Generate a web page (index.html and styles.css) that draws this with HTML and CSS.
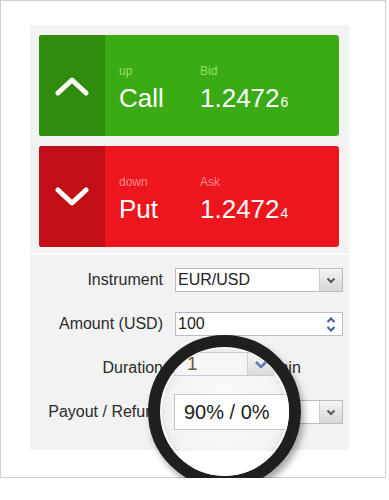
FILE: index.html
```html
<!DOCTYPE html>
<html>
<head>
    <title>Trade panel</title>
    <link rel="stylesheet" href="styles.css">
</head>
<body>
    <div class="frame">
        <div class="panel">
            <div class="trade trade--call">
                <div class="trade__icon">
                    <svg width="36" height="20" viewBox="0 0 36 20"><polyline points="4,17 18,4 32,17" fill="none" stroke="#fff" stroke-width="5" stroke-linecap="round" stroke-linejoin="round"/></svg>
                </div>
                <div class="trade__col trade__col--name">
                    <div class="trade__label">up</div>
                    <div class="trade__value">Call</div>
                </div>
                <div class="trade__col">
                    <div class="trade__label">Bid</div>
                    <div class="trade__value">1.2472<small>6</small></div>
                </div>
            </div>
            <div class="trade trade--put">
                <div class="trade__icon">
                    <svg width="36" height="20" viewBox="0 0 36 20"><polyline points="4,3 18,16 32,3" fill="none" stroke="#fff" stroke-width="5" stroke-linecap="round" stroke-linejoin="round"/></svg>
                </div>
                <div class="trade__col trade__col--name">
                    <div class="trade__label">down</div>
                    <div class="trade__value">Put</div>
                </div>
                <div class="trade__col">
                    <div class="trade__label">Ask</div>
                    <div class="trade__value">1.2472<small>4</small></div>
                </div>
            </div>

            <div class="form">
                <div class="form__row">
                    <label class="form__label">Instrument</label>
                    <div class="field">
                        <span class="field__text">EUR/USD</span>
                        <span class="field__btn">
                            <svg width="10" height="7" viewBox="0 0 10 7"><polyline points="1.5,1.5 5,5 8.5,1.5" fill="none" stroke="#555" stroke-width="2"/></svg>
                        </span>
                    </div>
                </div>
                <div class="form__row">
                    <label class="form__label">Amount (USD)</label>
                    <div class="field">
                        <span class="field__text">100</span>
                        <span class="field__spin">
                            <svg width="10" height="6" viewBox="0 0 10 6"><polyline points="1.5,5 5,1.5 8.5,5" fill="none" stroke="#3d5f9e" stroke-width="2"/></svg>
                            <svg width="10" height="6" viewBox="0 0 10 6"><polyline points="1.5,1 5,4.5 8.5,1" fill="none" stroke="#3d5f9e" stroke-width="2"/></svg>
                        </span>
                    </div>
                </div>
                <div class="form__row">
                    <label class="form__label">Duration</label>
                    <div class="field field--short">
                        <span class="field__text"></span>
                        <span class="field__btn">
                            <svg width="10" height="7" viewBox="0 0 10 7"><polyline points="1.5,1.5 5,5 8.5,1.5" fill="none" stroke="#3d5f9e" stroke-width="2"/></svg>
                        </span>
                    </div>
                    <span class="form__unit">min</span>
                </div>
                <div class="form__row">
                    <label class="form__label">Payout / Refund</label>
                    <div class="field">
                        <span class="field__text"></span>
                        <span class="field__btn">
                            <svg width="10" height="7" viewBox="0 0 10 7"><polyline points="1.5,1.5 5,5 8.5,1.5" fill="none" stroke="#555" stroke-width="2"/></svg>
                        </span>
                    </div>
                </div>
            </div>
        </div>

        <!-- lupe over duration / payout, shows their values -->
        <div class="lens">
            <div class="lens__dur">
                <span class="lens__dur-text">1</span>
                <span class="lens__dur-btn">
                    <svg width="14" height="9" viewBox="0 0 14 9"><polyline points="2,2 7,7 12,2" fill="none" stroke="#5b7bb5" stroke-width="2.5"/></svg>
                </span>
            </div>
            <div class="lens__field">90% / 0%</div>
            <div class="lens__floor"></div>
        </div>
    </div>
</body>
</html>
```

FILE: styles.css
```css
* {
    margin: 0;
    padding: 0;
    box-sizing: border-box;
}
body {
    background: #fff;
    font-family: "Liberation Sans", Arial, sans-serif;
}
.frame {
    position: relative;
    width: 386px;
    height: 478px;
    border: 1px solid #cfcfcf;
    padding: 24px 0 0 29px;
}
.panel {
    width: 319px;
    height: 425px;
    background: #f2f2f2;
    padding: 10px 10px 0 9px;
}

/* call / put buttons */
.trade {
    display: flex;
    height: 101px;
    border-radius: 3px;
    overflow: hidden;
    color: #fff;
}
.trade + .trade {
    margin-top: 10px;
}
.trade--call {
    background: #3bab15;
}
.trade--put {
    background: #ee161d;
}
.trade__icon {
    width: 66px;
    display: flex;
    align-items: center;
    justify-content: center;
}
.trade--call .trade__icon {
    background: #2f8c0d;
}
.trade--put .trade__icon {
    background: #c20f17;
}
.trade__col {
    padding-top: 29px;
}
.trade__col--name {
    width: 95px;
    padding-left: 14px;
}
.trade__label {
    font-size: 12px;
    line-height: 14px;
    margin-bottom: 5px;
}
.trade--call .trade__label {
    color: #97e167;
}
.trade--put .trade__label {
    color: #f7878b;
}
.trade__value {
    font-size: 26px;
    line-height: 30px;
}
.trade__value small {
    font-size: 14px;
    margin-left: 1px;
}

/* form */
.form {
    margin: 6px -10px 0 -9px;
    border-top: 2px solid #fafafa;
    padding: 13px 6px 0 0;
}
.form__row {
    display: flex;
    align-items: center;
    height: 24px;
    margin-bottom: 20px;
}
.form__label {
    width: 145px;
    padding-right: 12px;
    text-align: right;
    font-size: 16px;
    color: #2b2b2b;
}
.field {
    display: flex;
    flex: 1;
    height: 24px;
    background: #fff;
    border: 1px solid #b9bcc4;
}
.field--short {
    flex: none;
    width: 92px;
}
.field__text {
    flex: 1;
    padding-left: 2px;
    font-size: 16px;
    line-height: 22px;
    color: #222;
}
.field__btn {
    width: 23px;
    display: flex;
    align-items: center;
    justify-content: center;
    background: linear-gradient(#f4f4f4, #d6d6d6);
    border-left: 1px solid #c9c9c9;
}
.field__spin {
    width: 23px;
    display: flex;
    flex-direction: column;
    align-items: center;
    justify-content: center;
    gap: 3px;
}
.form__unit {
    margin-left: 8px;
    font-size: 16px;
    color: #2b2b2b;
}

/* magnifier */
.lens {
    position: absolute;
    left: 147px;
    top: 334px;
    width: 153px;
    height: 153px;
    border-radius: 50%;
    border: 12px solid #1f1f1f;
    overflow: hidden;
    background: radial-gradient(circle at 50% 45%, #fbfbfb 0, #f3f3f3 60%, #e9e9e9 100%);
    box-shadow: 3px 5px 7px rgba(0, 0, 0, 0.35), inset 0 0 0 2px rgba(255, 255, 255, 0.9), inset 0 0 8px rgba(0, 0, 0, 0.15);
}
.lens__dur {
    position: absolute;
    left: 14px;
    top: 5px;
    width: 100px;
    height: 24px;
    display: flex;
    border: 1px solid #c8cbd2;
    background: #f6f6f6;
}
.lens__dur-text {
    flex: 1;
    padding-left: 12px;
    font-size: 19px;
    line-height: 22px;
    color: #6a5a3a;
}
.lens__dur-btn {
    width: 26px;
    display: flex;
    align-items: center;
    justify-content: center;
    background: linear-gradient(#f6f6f6, #dcdcdc);
    border-left: 1px solid #cfcfcf;
}
.lens__field {
    position: absolute;
    left: 14px;
    top: 47px;
    width: 150px;
    height: 36px;
    border: 1px solid #c3c7cf;
    background: #fff;
    padding-left: 9px;
    font-size: 20px;
    line-height: 34px;
    color: #1c1c1c;
}
.lens__floor {
    position: absolute;
    left: 0;
    top: 104px;
    width: 100%;
    height: 40px;
    background: #fff;
    border-bottom: 1px solid #d8d8d8;
}
```
